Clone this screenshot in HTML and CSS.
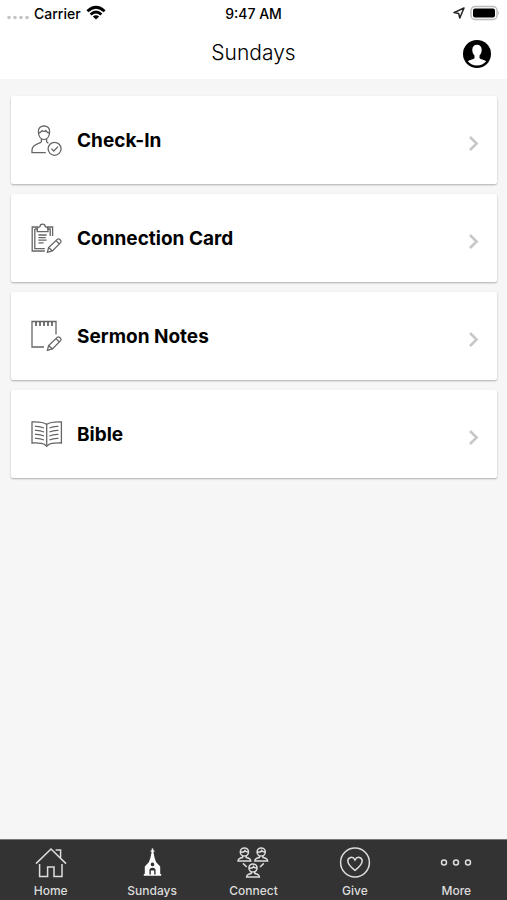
FILE: index.html
```html
<!DOCTYPE html>
<html lang="en">
<head>
  <meta charset="UTF-8" />
  <meta name="viewport" content="width=device-width, initial-scale=1.0" />
  <title>Sundays</title>
  <link rel="stylesheet" href="styles.css">
</head>
<body>
  <div class="app">
    <header class="header">
      <!-- Status bar -->
      <div class="status-bar">
        <div class="status-left">
          <svg class="signal" width="22" height="14" viewBox="0 0 22 14" fill="#c4c4c4">
            <circle cx="2" cy="8.5" r="1.8"/><circle cx="8" cy="8.5" r="1.8"/><circle cx="14" cy="8.5" r="1.8"/><circle cx="20" cy="8.5" r="1.8"/>
          </svg>
          <span>Carrier</span>
          <svg width="20" height="16" viewBox="0 0 20 16" fill="none" stroke="#000" stroke-width="2.8">
            <path d="M1.4 6.2 Q10 -1.8 18.6 6.2"/>
            <path d="M4.6 9.6 Q10 4.4 15.4 9.6"/>
            <path d="M10 14.6 L6.8 11.6 Q10 9 13.2 11.6 Z" fill="#000" stroke="none"/>
          </svg>
        </div>
        <span class="status-time">9:47 AM</span>
        <div class="status-right">
          <svg width="12" height="12" viewBox="0 0 12 12" fill="none" stroke="#222" stroke-width="1.5" stroke-linejoin="round">
            <path d="M11 1 L1 5.6 L5.6 6.4 L6.8 11 Z"/>
          </svg>
          <svg width="30" height="16" viewBox="0 0 30 16">
            <rect x="1" y="1.5" width="26" height="13" rx="4" fill="#fff" stroke="#bbb" stroke-width="1.4"/>
            <rect x="3" y="3.5" width="22" height="9" rx="2" fill="#000"/>
            <path d="M28.2 6 Q29.8 8 28.2 10 Z" fill="#999"/>
          </svg>
        </div>
      </div>

      <!-- Title bar -->
      <div class="title-bar">
        <h1>Sundays</h1>
        <button type="button" class="profile-btn" aria-label="Profile">
          <svg width="28" height="30" viewBox="0 -2 28 30">
            <circle cx="14" cy="14" r="14" fill="#000"/>
            <path d="M14 4.8 C10.8 4.8 9.2 7 9.3 10 C9.3 12.6 10.3 14.4 11.5 15.6 L11.5 18 C10.8 19.6 6.8 19.6 4.8 21.2 A11.8 11.8 0 0 0 23.2 21.2 C21.2 19.6 17.2 19.6 16.5 18 L16.5 15.6 C17.7 14.4 18.7 12.6 18.7 10 C18.8 7 17.2 4.8 14 4.8 Z" fill="#fff"/>
          </svg>
        </button>
      </div>
    </header>

    <main class="list">
      <a href="#" class="card">
        <svg class="card-icon" viewBox="0 0 32 32">
          <path d="M7.4 8.2 C7 4 9.6 2 13 2 C16.4 2 19 4 18.6 8.2 C18.4 12.4 16.2 15.6 13 15.6 C9.8 15.6 7.6 12.4 7.4 8.2 Z"/>
          <path d="M7.5 9 C9.6 8.8 10.6 6.8 11.2 6.6 C12 7.8 13.4 7.6 14.8 6.6 C15.6 8 17 8.9 18.5 9"/>
          <path d="M10.4 14.8 V17.6 C10 19.8 1.2 19.4 1 26 V28.6 H14.8 M15.6 14.8 V17.6 C15.8 18.4 16.4 18.8 17.4 19.2"/>
          <circle cx="23.6" cy="24.8" r="6.5"/>
          <path d="M20.4 24.6 L22.8 27 L27 22.6"/>
        </svg>
        <span class="card-label">Check-In</span>
        <svg class="chevron" viewBox="0 0 12 32"><path d="M2 13 L8.6 19.5 L2 26"/></svg>
      </a>

      <a href="#" class="card">
        <svg class="card-icon" viewBox="0 0 32 32">
          <path d="M7 5 H1.2 V29 H13.8 M3.8 7 V26.6 H13.8 M7 7 H3.8 M16 5 H21.6 V14 M16 7 H19.2 V14"/>
          <path d="M6.2 9.6 V6 L9 4.6 C9 1.4 14.2 1.4 14.2 4.6 L17 6 V9.6 Z"/>
          <path d="M7.4 13 H15.6 M7.4 15.6 H14.8 M7.4 18.2 H15.6 M7.4 20.8 H12.6"/>
          <path d="M16.4 30.4 L17.6 25.6 L26.4 17.2 C28 16.2 30.8 18.6 29.8 20.4 L21.4 29 Z M17.6 25.6 L21.4 29 M25 18.6 L28.4 22"/>
        </svg>
        <span class="card-label">Connection Card</span>
        <svg class="chevron" viewBox="0 0 12 32"><path d="M2 13 L8.6 19.5 L2 26"/></svg>
      </a>

      <a href="#" class="card">
        <svg class="card-icon" viewBox="0 0 32 32">
          <path d="M25 14.6 V1.5 H1 V27 H13"/>
          <path d="M5 2 V6 M9 2 V6 M13 2 V6 M17 2 V6 M21 2 V6" stroke-width="1.8"/>
          <path d="M16.4 30.4 L17.6 25.6 L26.4 17.2 C28 16.2 30.8 18.6 29.8 20.4 L21.4 29 Z M17.6 25.6 L21.4 29 M25 18.6 L28.4 22"/>
        </svg>
        <span class="card-label">Sermon Notes</span>
        <svg class="chevron" viewBox="0 0 12 32"><path d="M2 13 L8.6 19.5 L2 26"/></svg>
      </a>

      <a href="#" class="card">
        <svg class="card-icon" viewBox="0 0 32 32">
          <path d="M15.7 6.4 C12 4 6 3.8 1 4 V25 C6 24.8 12 25 14.2 27 L15.7 28.4 L17.2 27 C19.4 25 25.4 24.8 30.4 25 V4 C25.4 3.8 19.4 4 15.7 6.4 V27"/>
          <path d="M4 8.4 C7 8.2 10 8.6 13 10 M4 12.4 C7 12.2 10 12.6 13 14 M4 16.4 C7 16.2 10 16.6 13 18 M4 20.4 C7 20.2 10 20.6 13 22"/>
          <path d="M27.4 8.4 C24.4 8.2 21.4 8.6 18.4 10 M27.4 12.4 C24.4 12.2 21.4 12.6 18.4 14 M27.4 16.4 C24.4 16.2 21.4 16.6 18.4 18 M27.4 20.4 C24.4 20.2 21.4 20.6 18.4 22"/>
        </svg>
        <span class="card-label">Bible</span>
        <svg class="chevron" viewBox="0 0 12 32"><path d="M2 13 L8.6 19.5 L2 26"/></svg>
      </a>
    </main>

    <!-- Bottom tabs -->
    <nav class="tabs">
      <a href="#" class="tab">
        <svg class="tab-icon" viewBox="0 0 32 32">
          <path d="M1 16.6 L16 2 L31 16.6 M20.6 3 H25.6 V10.6"/>
          <path d="M4.6 17 V29.4 H12.6 V20 H19 V29.4 H27 V17"/>
        </svg>
        <span>Home</span>
      </a>
      <a href="#" class="tab">
        <svg class="tab-icon solid" viewBox="0 0 32 32">
          <path fill-rule="evenodd" d="M15.7 1.6 H17.3 V3.4 H18.4 V4.8 H17.3 L18.6 11 L20.2 15.2 L24.2 19.6 V27 H25.2 V28.8 H7.8 V27 H8.8 V19.6 L12.8 15.2 L14.4 11 L15.7 4.8 H14.6 V3.4 H15.7 Z M16.5 15.6 A1.8 1.8 0 1 0 16.5 19.2 A1.8 1.8 0 1 0 16.5 15.6 Z M13.4 27.4 V23.4 Q13.4 20.8 16.5 20.8 Q19.6 20.8 19.6 23.4 V27.4 H18.2 V23.4 H14.8 V27.4 Z"/>
        </svg>
        <span>Sundays</span>
      </a>
      <a href="#" class="tab">
        <svg class="tab-icon" viewBox="0 0 32 32">
          <defs>
            <g id="person">
              <circle cx="7.4" cy="5" r="4.1"/>
              <path d="M3.4 5 Q7 5.6 8 3.6 Q9 5.2 11.4 5 M5.6 8.8 V10.4 Q1.2 11 1 14 H13.8 Q13.6 11 9.2 10.4 V8.8"/>
            </g>
          </defs>
          <use href="#person"/>
          <use href="#person" x="16.8"/>
          <use href="#person" x="8.6" y="16"/>
          <path d="M6 16.4 L9.8 20 M26.8 16.4 L23 20"/>
        </svg>
        <span>Connect</span>
      </a>
      <a href="#" class="tab">
        <svg class="tab-icon" viewBox="0 0 32 32">
          <circle cx="16" cy="15.5" r="14.4"/>
          <path d="M16 23.4 C13 21 8.8 17.8 8.8 14 C8.8 10 14 8.8 16 13 C18 8.8 23.2 10 23.2 14 C23.2 17.8 19 21 16 23.4 Z"/>
        </svg>
        <span>Give</span>
      </a>
      <a href="#" class="tab">
        <svg class="tab-icon" viewBox="0 0 32 32">
          <circle cx="4" cy="15.5" r="2.5"/><circle cx="16" cy="15.5" r="2.5"/><circle cx="28" cy="15.5" r="2.5"/>
        </svg>
        <span>More</span>
      </a>
    </nav>
  </div>
</body>
</html>
```
FILE: styles.css
```css
*, *::before, *::after {
  box-sizing: border-box;
}
body {
  margin: 0;
  font-family: Inter, Roboto, sans-serif;
  background-color: #f6f6f6;
  color: #000;
}
svg {
  display: block;
  flex-shrink: 0;
}
.app {
  display: flex;
  flex-direction: column;
  min-height: 100vh;
}
.header {
  background-color: #fff;
}
.status-bar {
  display: grid;
  grid-template-columns: 1fr auto 1fr;
  align-items: center;
  height: 26px;
  padding: 0 7px;
  font-size: 14px;
  font-weight: 500;
}
.status-left, .status-right {
  display: flex;
  align-items: center;
  gap: 5px;
}
.status-right {
  justify-content: flex-end;
}
.signal {
  margin-top: 6px;
}
.title-bar {
  display: grid;
  grid-template-columns: 28px 1fr 28px;
  align-items: center;
  height: 53px;
  padding: 0 16px;
}
.title-bar h1 {
  grid-column: 2;
  margin: 0;
  font-size: 21px;
  font-weight: 300;
  text-align: center;
}
.profile-btn {
  padding: 0;
  border: none;
  background: none;
  cursor: pointer;
}
.list {
  flex: 1;
  display: flex;
  flex-direction: column;
  gap: 10px;
  padding: 17px 10px 17px 11px;
}
.card {
  display: flex;
  align-items: center;
  height: 88px;
  padding: 0 17px 0 20px;
  background-color: #fff;
  border-radius: 2px;
  box-shadow: 0 1px 2px rgba(0, 0, 0, 0.3);
  color: #000;
  text-decoration: none;
}
.card-icon {
  width: 32px;
  height: 32px;
  fill: none;
  stroke: #666;
  stroke-width: 1.3;
}
.card-label {
  flex: 1;
  margin-left: 14px;
  font-size: 19px;
  font-weight: 700;
}
.chevron {
  width: 12px;
  height: 32px;
  fill: none;
  stroke: #c7c7c7;
  stroke-width: 2.6;
}
.tabs {
  display: grid;
  grid-template-columns: repeat(5, 1fr);
  height: 61px;
  border-top: 1px solid #777;
  background-color: #333;
}
.tab {
  display: flex;
  flex-direction: column;
  align-items: center;
  gap: 4px;
  padding-top: 7px;
  color: #ddd;
  font-size: 12px;
  font-weight: 500;
  line-height: 16px;
  text-decoration: none;
}
.tab-icon {
  width: 32px;
  height: 32px;
  fill: none;
  stroke: #ddd;
  stroke-width: 1.5;
}
.tab-icon.solid {
  fill: #fff;
  stroke: none;
}
```
